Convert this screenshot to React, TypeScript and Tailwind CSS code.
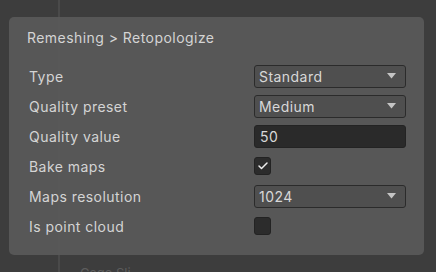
import { Check } from "lucide-react";

function Dropdown({ value }: { value: string }) {
  return (
    <div className="w-[152px] h-[23px] flex items-center justify-between pl-[4px] pr-[9px] bg-[#4f4f4f] border border-[#2b2b2b] rounded-[3px] text-[14px] tracking-[0.45px] text-[#d8d8d8]">
      <span>{value}</span>
      <svg width="9" height="6" viewBox="0 0 9 6">
        <path d="M0 0 H9 L4.5 5.5 Z" fill="#c4c4c4" />
      </svg>
    </div>
  );
}

function Checkbox({ checked }: { checked: boolean }) {
  return (
    <div className="w-[17px] h-[18px] flex items-center justify-center bg-[#2c2c2c] border border-[#232323] rounded-[3px]">
      {checked && <Check className="w-[12px] h-[12px] text-[#ececec]" strokeWidth={3} />}
    </div>
  );
}

export default function App() {
  const rows: { label: string; control: React.ReactNode }[] = [
    { label: "Type", control: <Dropdown value="Standard" /> },
    { label: "Quality preset", control: <Dropdown value="Medium" /> },
    {
      label: "Quality value",
      control: (
        <div className="w-[152px] h-[23px] flex items-center pl-[5px] bg-[#2a2a2a] border border-[#232323] rounded-[3px] text-[14px] tracking-[0.45px] text-[#d8d8d8]">
          50
        </div>
      ),
    },
    { label: "Bake maps", control: <Checkbox checked /> },
    { label: "Maps resolution", control: <Dropdown value="1024" /> },
    { label: "Is point cloud", control: <Checkbox checked={false} /> },
  ];

  return (
    <div className="relative w-[436px] h-[272px] overflow-hidden bg-[#3d3d3d] font-['Inter',sans-serif]">
      {/* faint watermark */}
      <svg className="absolute inset-0" width="436" height="272" viewBox="0 0 436 272">
        <g fill="none" stroke="#000" strokeOpacity="0.06" strokeWidth="26" strokeLinejoin="round">
          <path d="M40 150 C40 90 110 60 165 110 L285 230 L395 120 C340 70 300 80 250 130 L150 235" />
        </g>
      </svg>
      <div className="absolute left-[58px] top-0 w-[2px] h-[272px] bg-[#4a4a4a]" />
      <div className="absolute left-[80px] top-[266px] text-[13px] leading-[14px] text-[#5c5c5c]">Cage Sli</div>

      <div className="relative mt-[17px] ml-[9px] w-[415px] h-[238px] bg-[#585858]/95 rounded-[5px] pl-[18px] pr-[18px] pt-[12px]">
        <div className="h-[17px] leading-[17px] text-[14px] text-[#d4d4d4] tracking-[0.45px]">
          Remeshing &gt; Retopologize
        </div>
        <div className="mt-[15px] flex flex-col">
          {rows.map((r) => (
            <div key={r.label} className="h-[30px] flex items-center justify-between">
              <span className="pl-[2px] pt-[1px] text-[14px] text-[#d4d4d4] tracking-[0.45px]">{r.label}</span>
              <div className="w-[152px] flex">{r.control}</div>
            </div>
          ))}
        </div>
      </div>
    </div>
  );
}
